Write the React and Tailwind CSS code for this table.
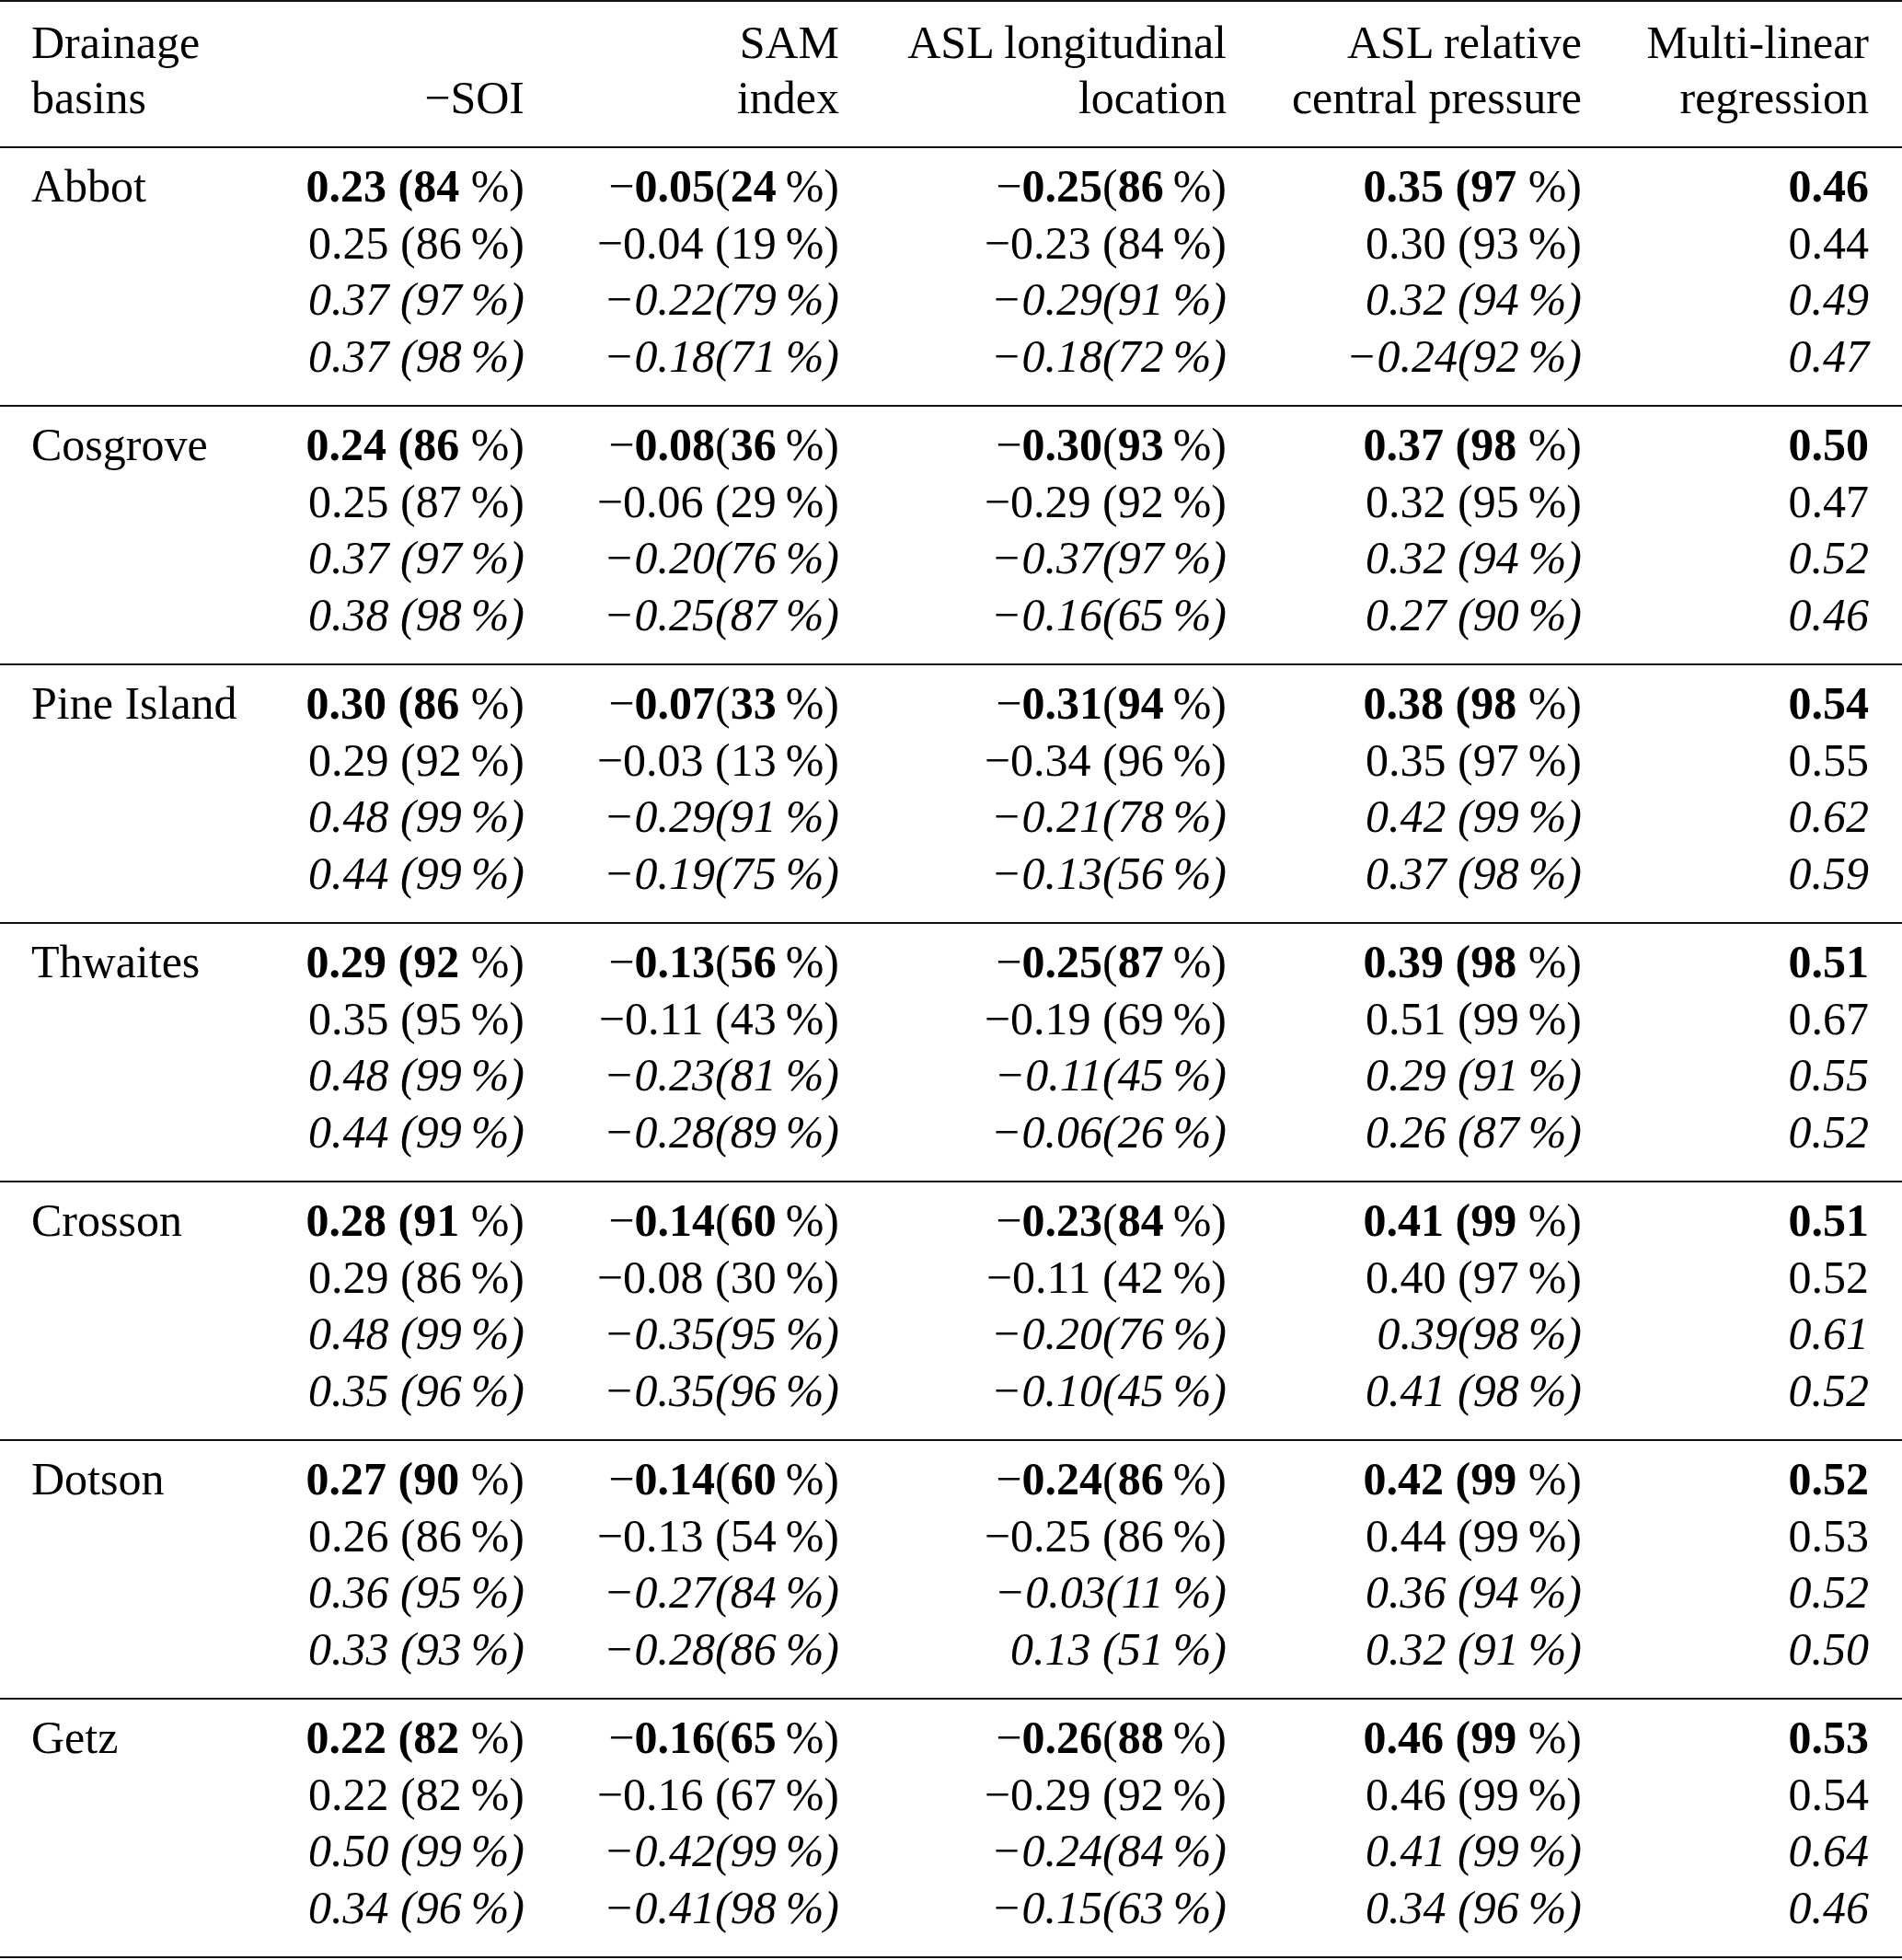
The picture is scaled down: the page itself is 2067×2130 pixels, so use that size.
import React from "react";

const M = "\u2212";
const T = "\u2009";

const sections = [
  {
    name: "Abbot",
    bold: ["0.23", "84", "0.05", "24", "0.25", "86", "0.35", "97", "0.46"],
    rows: [
      ["0.25 (86%)", "−0.04 (19%)", "−0.23 (84%)", "0.30 (93%)", "0.44"],
      ["0.37 (97%)", "−0.22(79%)", "−0.29(91%)", "0.32 (94%)", "0.49"],
      ["0.37 (98%)", "−0.18(71%)", "−0.18(72%)", "−0.24(92%)", "0.47"],
    ],
  },
  {
    name: "Cosgrove",
    bold: ["0.24", "86", "0.08", "36", "0.30", "93", "0.37", "98", "0.50"],
    rows: [
      ["0.25 (87%)", "−0.06 (29%)", "−0.29 (92%)", "0.32 (95%)", "0.47"],
      ["0.37 (97%)", "−0.20(76%)", "−0.37(97%)", "0.32 (94%)", "0.52"],
      ["0.38 (98%)", "−0.25(87%)", "−0.16(65%)", "0.27 (90%)", "0.46"],
    ],
  },
  {
    name: "Pine Island",
    bold: ["0.30", "86", "0.07", "33", "0.31", "94", "0.38", "98", "0.54"],
    rows: [
      ["0.29 (92%)", "−0.03 (13%)", "−0.34 (96%)", "0.35 (97%)", "0.55"],
      ["0.48 (99%)", "−0.29(91%)", "−0.21(78%)", "0.42 (99%)", "0.62"],
      ["0.44 (99%)", "−0.19(75%)", "−0.13(56%)", "0.37 (98%)", "0.59"],
    ],
  },
  {
    name: "Thwaites",
    bold: ["0.29", "92", "0.13", "56", "0.25", "87", "0.39", "98", "0.51"],
    rows: [
      ["0.35 (95%)", "−0.11 (43%)", "−0.19 (69%)", "0.51 (99%)", "0.67"],
      ["0.48 (99%)", "−0.23(81%)", "−0.11(45%)", "0.29 (91%)", "0.55"],
      ["0.44 (99%)", "−0.28(89%)", "−0.06(26%)", "0.26 (87%)", "0.52"],
    ],
  },
  {
    name: "Crosson",
    bold: ["0.28", "91", "0.14", "60", "0.23", "84", "0.41", "99", "0.51"],
    rows: [
      ["0.29 (86%)", "−0.08 (30%)", "−0.11 (42%)", "0.40 (97%)", "0.52"],
      ["0.48 (99%)", "−0.35(95%)", "−0.20(76%)", "0.39(98%)", "0.61"],
      ["0.35 (96%)", "−0.35(96%)", "−0.10(45%)", "0.41 (98%)", "0.52"],
    ],
  },
  {
    name: "Dotson",
    bold: ["0.27", "90", "0.14", "60", "0.24", "86", "0.42", "99", "0.52"],
    rows: [
      ["0.26 (86%)", "−0.13 (54%)", "−0.25 (86%)", "0.44 (99%)", "0.53"],
      ["0.36 (95%)", "−0.27(84%)", "−0.03(11%)", "0.36 (94%)", "0.52"],
      ["0.33 (93%)", "−0.28(86%)", "0.13 (51%)", "0.32 (91%)", "0.50"],
    ],
  },
  {
    name: "Getz",
    bold: ["0.22", "82", "0.16", "65", "0.26", "88", "0.46", "99", "0.53"],
    rows: [
      ["0.22 (82%)", "−0.16 (67%)", "−0.29 (92%)", "0.46 (99%)", "0.54"],
      ["0.50 (99%)", "−0.42(99%)", "−0.24(84%)", "0.41 (99%)", "0.64"],
      ["0.34 (96%)", "−0.41(98%)", "−0.15(63%)", "0.34 (96%)", "0.46"],
    ],
  },
];

const GRID =
  "grid grid-cols-[266px_270px_342px_421px_386px_312px] pl-[34px] pr-[36px]";

function fmt(s) {
  return s.replace(/−/g, M).replace(/%/g, T + "%");
}

function BoldRow({ b }) {
  const [soi, soiP, sam, samP, lon, lonP, rel, relP, mlr] = b;
  return (
    <>
      <div className="text-right whitespace-nowrap">
        <b className="font-bold">{soi} ({soiP}</b> %)
      </div>
      <div className="text-right whitespace-nowrap">
        {M}
        <b className="font-bold">{sam}</b>(<b className="font-bold">{samP}</b>
        {T}%)
      </div>
      <div className="text-right whitespace-nowrap">
        {M}
        <b className="font-bold">{lon}</b>(<b className="font-bold">{lonP}</b>
        {T}%)
      </div>
      <div className="text-right whitespace-nowrap">
        <b className="font-bold">{rel} ({relP}</b> %)
      </div>
      <div className="text-right whitespace-nowrap">
        <b className="font-bold">{mlr}</b>
      </div>
    </>
  );
}

function Section({ s }) {
  return (
    <div className="border-b-2 border-[#111] pt-[11px] pb-[22px]">
      <div className={GRID + " leading-[61.5px]"}>
        <div className="whitespace-nowrap">{s.name}</div>
        <BoldRow b={s.bold} />
        {s.rows.map((r, i) => (
          <React.Fragment key={i}>
            <div />
            {r.map((c, j) => (
              <div
                key={j}
                className={
                  "text-right whitespace-nowrap " + (i > 0 ? "italic" : "")
                }
              >
                {fmt(c)}
              </div>
            ))}
          </React.Fragment>
        ))}
      </div>
    </div>
  );
}

export default function App() {
  return (
    <div
      className="w-[2067px] h-[2130px] bg-white text-black text-[50px]"
      style={{ fontFamily: '"Liberation Serif", "Times New Roman", serif' }}
    >
      <div className="border-t-2 border-b-2 border-[#111] pt-[14px] pb-[23px]">
        <div className={GRID + " leading-[60px]"}>
          <div className="whitespace-nowrap">
            Drainage
            <br />
            basins
          </div>
          <div className="text-right whitespace-nowrap">
            <br />
            {M}SOI
          </div>
          <div className="text-right whitespace-nowrap">
            SAM
            <br />
            index
          </div>
          <div className="text-right whitespace-nowrap">
            ASL longitudinal
            <br />
            location
          </div>
          <div className="text-right whitespace-nowrap">
            ASL relative
            <br />
            central pressure
          </div>
          <div className="text-right whitespace-nowrap">
            Multi-linear
            <br />
            regression
          </div>
        </div>
      </div>
      {sections.map((s) => (
        <Section key={s.name} s={s} />
      ))}
    </div>
  );
}
